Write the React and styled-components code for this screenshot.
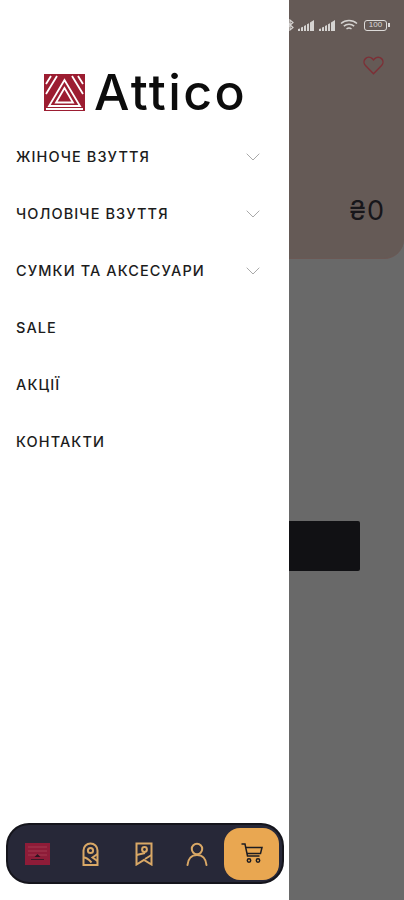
import React from "react";
import styled, { createGlobalStyle } from "styled-components";

const Global = createGlobalStyle`
    html, body { margin: 0; padding: 0; background: #696969; }
    body { font-family: "Inter", "Liberation Sans", sans-serif; }
`

const Screen = styled.div`
    width: 404px;
    height: 900px;
    display: flex;
    overflow: hidden;
    background: #696969;
`
const Drawer = styled.aside`
    width: 289px;
    height: 900px;
    flex: none;
    box-sizing: border-box;
    background: #fff;
    display: flex;
    flex-direction: column;
    padding: 66px 5px 16px 6px;
`
const Brand = styled.div`
    display: flex;
    align-items: center;
    gap: 9px;
    margin-left: 38px;
    height: 52px;
`
const BrandName = styled.span`
    font-family: "Inter", "Liberation Sans", sans-serif;
    font-size: 50px;
    font-weight: 500;
    line-height: 52px;
    letter-spacing: 2.4px;
    color: #0c0c0c;
`
const Menu = styled.nav`
    display: flex;
    flex-direction: column;
    margin-top: 10px;
    flex: 1;
`
const MenuRow = styled.div`
    height: 57px;
    display: flex;
    align-items: center;
    justify-content: space-between;
    padding: 0 24px 0 10px;
    box-sizing: border-box;
`
const MenuLabel = styled.span`
    font-size: 14.5px;
    font-weight: 500;
    letter-spacing: 1.1px;
    color: #1c1c1c;
    white-space: nowrap;
`
const TabBar = styled.div`
    height: 61px;
    box-sizing: border-box;
    border: 2px solid #15151c;
    border-radius: 23px;
    background: #272838;
    display: flex;
    align-items: center;
    padding: 0 3px 0 3px;
`
const TabSlot = styled.div`
    width: 53.4px;
    display: flex;
    justify-content: center;
    align-items: center;
`
const CartButton = styled.div`
    margin-left: auto;
    width: 55px;
    height: 52px;
    border-radius: 16px;
    background: #e9a751;
    display: flex;
    align-items: center;
    justify-content: center;
`
const Behind = styled.main`
    flex: 1;
    display: flex;
    flex-direction: column;
    align-items: flex-start;
`
const TopPanel = styled.section`
    width: 115px;
    height: 259px;
    box-sizing: border-box;
    background: #655a56;
    border-radius: 0 0 20px 0;
    display: flex;
    flex-direction: column;
    border-bottom: 1px solid #6b5854;
`
const StatusRow = styled.div`
    height: 14px;
    margin-top: 18px;
    display: flex;
    align-items: center;
    gap: 4px;
`
const BluetoothEdge = styled.div`
    width: 5px;
    height: 12px;
    overflow: hidden;
    display: flex;
    justify-content: flex-end;
`
const Battery = styled.div`
    width: 23px;
    height: 11px;
    box-sizing: border-box;
    margin-left: 2px;
    border: 1.5px solid #dcdad8;
    border-radius: 3px;
    font-family: "Liberation Sans", sans-serif;
    font-size: 8px;
    line-height: 8px;
    text-align: center;
    color: #dcdad8;
`
const BatteryTip = styled.div`
    width: 2px;
    height: 4px;
    margin-left: -3px;
    background: #dcdad8;
`
const HeartRow = styled.div`
    display: flex;
    justify-content: flex-end;
    padding-right: 20px;
    margin-top: 24px;
`
const Price = styled.div`
    margin-top: 121px;
    padding-right: 19px;
    text-align: right;
    font-family: "Inter", "Liberation Sans", sans-serif;
    font-size: 27px;
    line-height: 30px;
    letter-spacing: 1px;
    color: #17161a;
`
const DarkButton = styled.div`
    width: 71px;
    height: 50px;
    margin-top: 262px;
    background: #111114;
    border-radius: 0 2px 2px 0;
`

const items = [
    { label: "ЖІНОЧЕ ВЗУТТЯ", more: true },
    { label: "ЧОЛОВІЧЕ ВЗУТТЯ", more: true },
    { label: "СУМКИ ТА АКСЕСУАРИ", more: true },
    { label: "SALE" },
    { label: "АКЦІЇ" },
    { label: "КОНТАКТИ" },
]

const Chevron = () => (
    <svg width="14" height="8" viewBox="0 0 14 8" fill="none">
        <path d="M.7.7 7 7 13.3.7" stroke="#a9a9a9" strokeWidth="1" />
    </svg>
)

const LogoMark = () => (
    <svg width="41" height="37" viewBox="0 0 41 37" fill="none">
        <rect width="41" height="37" fill="#9c1d31" />
        <g stroke="#fff" strokeWidth="1.8" fill="none">
            <path d="M20.500 6 5 32h31L20.500 6Z" />
            <path d="M20.500 14 12 28.500h17L20.500 14Z" />
            <path d="M2 20 13 2M2 10 7 2M28 2l11 18M34 2l5 8M2 35h37" />
        </g>
    </svg>
)

const HomeIcon = () => (
    <svg width="25" height="22" viewBox="0 0 25 22">
        <rect width="25" height="22" fill="#8e1c38" />
        <path d="M3 4h19M3 8h19M3 12h19" stroke="#a33a50" strokeWidth="1" />
        <path d="M9.500 14h6l-3-3Z" fill="#2a1520" />
        <path d="M6 16.500h13" stroke="#3a1a28" strokeWidth="1" />
    </svg>
)

const PinIcon = () => (
    <svg width="17" height="24" viewBox="0 0 17 24" fill="none" stroke="#d9a866" strokeWidth="2">
        <path d="M1.500 23V8.500a7 7 0 0 1 14 0V23H1.500Z" />
        <circle cx="8.500" cy="8.500" r="2.600" />
        <path d="M1.500 15.500c3 0 5 1.500 8 5M15.500 12l-5 3.500 5 3.500" />
    </svg>
)

const BookmarkIcon = () => (
    <svg width="18" height="24" viewBox="0 0 18 24" fill="none" stroke="#d9a866" strokeWidth="2">
        <path d="M1.500 1.500h15v21L9 18l-7.500 4.500v-21Z" />
        <circle cx="9.500" cy="7.500" r="2.400" />
        <path d="M1.500 13 10 11M16.500 13 10 17" />
    </svg>
)

const UserIcon = () => (
    <svg width="22" height="24" viewBox="0 0 22 24" fill="none" stroke="#d9a866" strokeWidth="2" strokeLinecap="round">
        <circle cx="11" cy="7" r="5.200" />
        <path d="M1.500 23c.5-6 4-10 9.500-10s9 4 9.500 10" />
    </svg>
)

const CartIcon = () => (
    <svg width="22" height="21" viewBox="0 0 22 21" fill="none" stroke="#1c1c22" strokeWidth="1.500">
        <path d="M.5 1H4l2.500 12h12" />
        <path d="M4.800 4.500H21L19.500 10.500H6" />
        <circle cx="8" cy="17.500" r="1.700" />
        <circle cx="17" cy="17.500" r="1.700" />
    </svg>
)

const Heart = () => (
    <svg width="21" height="19" viewBox="0 0 23 21" fill="none">
        <path d="M11.500 19.500 2.600 10.400a5.300 5.300 0 0 1 7.500-7.500l1.400 1.500 1.400-1.500a5.300 5.300 0 0 1 7.500 7.500l-8.900 9.100Z" stroke="#7d2f36" strokeWidth="1.600" />
    </svg>
)

const Signal = () => (
    <svg width="17" height="11" viewBox="0 0 17 11">
        <path d="M0 11V9l2-.6V11Zm3 0V7.500l2-.8V11Zm3 0V6l2-1v6Zm3 0V4.300l2-1V11Zm3 0V2.500L16 0v11Z" fill="#d5d3d1" />
    </svg>
)

const StatusIcons = () => (
    <StatusRow>
        <BluetoothEdge>
            <svg width="8" height="12" viewBox="0 0 8 12" fill="none" style={{ flex: "none" }}>
                <path d="M1 3 7 8.500 4 11V1l3 2.500L1 9" stroke="#d5d3d1" strokeWidth="1.200" />
            </svg>
        </BluetoothEdge>
        <Signal />
        <Signal />
        <svg width="18" height="13" viewBox="0 0 18 13" fill="none" stroke="#d5d3d1" strokeWidth="1.500">
            <path d="M1 4.500c4.500-4 11.500-4 16 0M3.800 7.200c3-2.500 7.400-2.500 10.400 0M6.500 10c1.500-1.200 3.500-1.200 5 0" />
        </svg>
        <Battery>100</Battery>
        <BatteryTip />
    </StatusRow>
)

export default function App() {
    return (
        <Screen>
            <Global />
            <Drawer>
                <Brand>
                    <LogoMark />
                    <BrandName>Attico</BrandName>
                </Brand>
                <Menu>
                    {items.map(item => (
                        <MenuRow key={item.label}>
                            <MenuLabel>{item.label}</MenuLabel>
                            {item.more && <Chevron />}
                        </MenuRow>
                    ))}
                </Menu>
                <TabBar>
                    <TabSlot><HomeIcon /></TabSlot>
                    <TabSlot><PinIcon /></TabSlot>
                    <TabSlot><BookmarkIcon /></TabSlot>
                    <TabSlot><UserIcon /></TabSlot>
                    <CartButton><CartIcon /></CartButton>
                </TabBar>
            </Drawer>
            <Behind>
                <TopPanel>
                    <StatusIcons />
                    <HeartRow><Heart /></HeartRow>
                    <Price>₴0</Price>
                </TopPanel>
                <DarkButton />
            </Behind>
        </Screen>
    )
}
